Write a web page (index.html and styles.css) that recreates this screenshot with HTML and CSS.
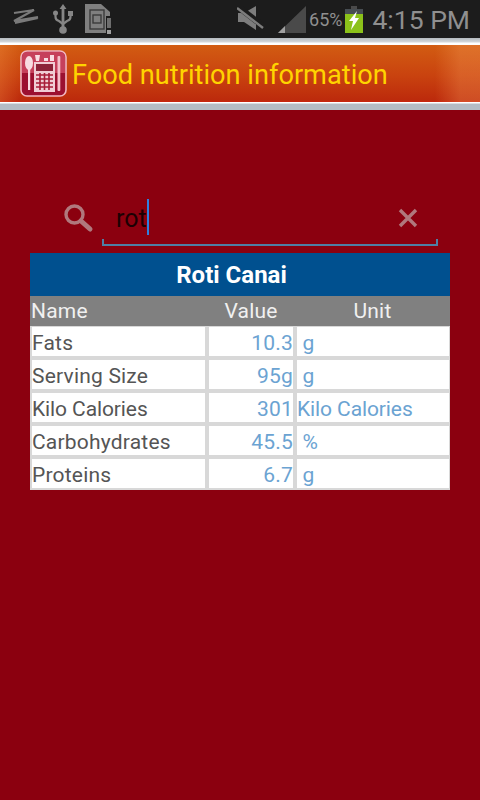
FILE: index.html
```html
<!DOCTYPE html>
<html lang="en">
<head>
    <meta charset="UTF-8">
    <meta name="viewport" content="width=device-width, initial-scale=1.0">
    <title>Food nutrition information</title>
    <link rel="stylesheet" href="styles.css">
</head>
<body>
    <!-- Status bar -->
    <div class="status-bar">
        <div class="status-left">
            <svg class="icon-pen" width="30" height="24" viewBox="0 0 30 24">
                <path d="M4 7 L24 4 L4 15 L28 11 M5 17 L28 12" fill="none" stroke="#7a7a7a" stroke-width="2"/>
            </svg>
            <svg class="icon-usb" width="20" height="30" viewBox="0 0 20 30">
                <path d="M10 0 L13.500 5 H11.400 V24 H8.600 V5 H6.500 Z" fill="#868686"/>
                <circle cx="10" cy="26" r="3.800" fill="#868686"/>
                <path d="M2.500 10 V13 Q2.500 16 6 17 L10 20 L14 17 Q17.500 16 17.500 13 V11" fill="none" stroke="#868686" stroke-width="2.200"/>
                <circle cx="2.500" cy="9" r="2.500" fill="#868686"/>
                <rect x="15" y="7" width="5" height="5" fill="#868686"/>
            </svg>
            <svg class="icon-sd" width="27" height="30" viewBox="0 0 27 30">
                <path d="M0 0 H16 L25 8 V29 H0 Z" fill="#7f7f7f"/>
                <rect x="5" y="6" width="14" height="19" fill="none" stroke="#3b3b3b" stroke-width="1.400"/>
                <rect x="8" y="11" width="8" height="8" fill="none" stroke="#3b3b3b" stroke-width="1.400"/>
                <rect x="21" y="12" width="6" height="18" fill="#1c1c1c"/>
                <rect x="22" y="14" width="4" height="10" fill="#6e6e6e"/>
                <rect x="22" y="26" width="4" height="4" fill="#a0a0a0"/>
            </svg>
        </div>
        <div class="status-right">
            <svg class="icon-mute" width="27" height="24" viewBox="0 0 27 24">
                <path d="M1 7 H7 L19 0 V24 L7 16 H1 Z" fill="#7d7d7d"/>
                <path d="M0 0 L26 20" stroke="#1c1c1c" stroke-width="6"/>
                <path d="M0 2 L26 22" stroke="#7d7d7d" stroke-width="2.400"/>
            </svg>
            <svg class="icon-signal" width="28" height="27" viewBox="0 0 28 27">
                <path d="M28 0 V27 H0 Z" fill="#4a4a4a"/>
                <path d="M7 20 V27 H0 Z" fill="#a0a0a0"/>
            </svg>
            <span class="battery-text">65%</span>
            <svg class="icon-battery" width="18" height="27" viewBox="0 0 18 27">
                <rect x="6" y="0" width="6" height="3" fill="#4a4a4a"/>
                <rect x="0" y="3" width="18" height="6" fill="#474d52"/>
                <rect x="0" y="8" width="18" height="19" fill="#8cc21a"/>
                <path d="M12 5 L4 15 H8 L6 24 L14 12 H10 Z" fill="#fff"/>
            </svg>
            <span class="clock">4:15 PM</span>
        </div>
    </div>

    <!-- App title -->
    <div class="app-header">
        <div class="app-title-bar">
            <svg class="app-icon" width="47" height="47" viewBox="0 0 47 47">
                <rect x="1" y="1" width="45" height="45" rx="6" fill="#9c1030" stroke="#f2b6c0" stroke-width="1.600"/>
                <path d="M2 7 Q2 2 7 2 H40 Q45 2 45 7 V23 H2 Z" fill="#d9566e" opacity="0.7"/>
                <ellipse cx="9" cy="13" rx="4" ry="7" fill="#f8dce2"/>
                <rect x="8" y="19" width="2.200" height="21" fill="#f8dce2"/>
                <rect x="37.500" y="6" width="2.800" height="35" rx="1" fill="#f4c0ca"/>
                <rect x="14" y="12" width="21" height="30" fill="#f0ccd4"/>
                <rect x="16" y="14" width="17" height="7" fill="#8c2238"/>
                <path d="M16 25 H33 M16 29 H33 M16 33 H33 M16 37 H33 M20 23 V40 M24.500 23 V40 M29 23 V40" stroke="#a81c38" stroke-width="1.600"/>
                <path d="M15 5 L20 5 L19 11 H16 Z M24 8 H28 V11 H24 Z M30 5 H34 V11 H30 Z" fill="#f8dce2"/>
            </svg>
            <span class="app-title">Food nutrition information</span>
        </div>
    </div>

    <div class="content">
        <!-- Search box -->
        <div class="search-row">
            <svg class="icon-search" width="32" height="32" viewBox="0 0 32 32">
                <circle cx="12.500" cy="12.500" r="8.500" fill="none" stroke="#b0787d" stroke-width="3.400"/>
                <path d="M19 19 L28 27" stroke="#b0787d" stroke-width="5" stroke-linecap="round"/>
            </svg>
            <div class="search-field">
                <span class="search-text">rot</span><span class="caret"></span>
                <svg class="icon-clear" width="22" height="22" viewBox="0 0 22 22">
                    <path d="M3 3 L19 19 M19 3 L3 19" stroke="#b0787d" stroke-width="3.400"/>
                </svg>
            </div>
        </div>

        <!-- Nutrition table -->
        <div class="food-table">
            <div class="food-name">Roti Canai</div>
            <div class="table-head">
                <span>Name</span>
                <span class="center">Value</span>
                <span class="center">Unit</span>
            </div>
            <div class="table-rows">
                <div class="cell name">Fats</div>
                <div class="cell value">10.3</div>
                <div class="cell unit">&nbsp;g</div>
                <div class="cell name">Serving Size</div>
                <div class="cell value">95g</div>
                <div class="cell unit">&nbsp;g</div>
                <div class="cell name tight">Kilo Calories</div>
                <div class="cell value">301</div>
                <div class="cell unit tight">Kilo Calories</div>
                <div class="cell name">Carbohydrates</div>
                <div class="cell value">45.5</div>
                <div class="cell unit">&nbsp;%</div>
                <div class="cell name">Proteins</div>
                <div class="cell value">6.7</div>
                <div class="cell unit">&nbsp;g</div>
            </div>
        </div>
    </div>
</body>
</html>
```

FILE: styles.css
```css
html, body {
    margin: 0;
    padding: 0;
}
body {
    width: 480px;
    height: 800px;
    overflow: hidden;
    font-family: Roboto, sans-serif;
    background-color: #8b000f;
}
.status-bar {
    height: 38px;
    box-sizing: border-box;
    padding: 0 10px 0 8px;
    background-color: #1c1c1c;
    display: flex;
    justify-content: space-between;
    align-items: center;
}
.status-left {
    display: flex;
    align-items: center;
}
.icon-pen {
    margin: 0 13px 3px 2px;
}
.icon-usb {
    margin-right: 12px;
}
.status-right {
    display: flex;
    align-items: center;
}
.icon-mute {
    margin: 0 14px 2px 0;
}
.icon-signal {
    margin-right: 3px;
}
.battery-text {
    color: #8f8f8f;
    font-size: 18px;
    margin-right: 3px;
}
.icon-battery {
    margin-right: 9px;
}
.clock {
    color: #8f8f8f;
    font-size: 26.500px;
}
.app-header {
    height: 72px;
    box-sizing: border-box;
    padding: 7px 0 8px;
    background: linear-gradient(#b4babf 0, #d4d8db 4px, #fff 5px, #fff 65px, #b4bcc4 66px, #b4bcc4 100%);
}
.app-title-bar {
    height: 57px;
    box-sizing: border-box;
    padding-left: 20px;
    display: flex;
    align-items: center;
    background:
        linear-gradient(90deg, rgba(255, 160, 80, 0.25), rgba(255, 160, 80, 0) 20px, rgba(255, 160, 80, 0) 435px, rgba(255, 170, 100, 0.28) 460px),
        linear-gradient(#d25c12, #c9420f 55%, #bc2a0c 97%, #cc2410);
}
.app-icon {
    margin-right: 5px;
}
.app-title {
    color: #ffd400;
    font-size: 27.200px;
    padding-top: 2px;
    white-space: nowrap;
}
.content {
    padding: 89px 30px 0;
}
.search-row {
    display: flex;
    align-items: flex-start;
    height: 54px;
}
.icon-search {
    margin: 3px 8px 0 32px;
    flex: none;
}
.search-field {
    position: relative;
    width: 336px;
    height: 47px;
    box-sizing: border-box;
    padding: 5px 0 0 14px;
    display: flex;
    align-items: flex-start;
    border-bottom: 2px solid #4f7fa5;
}
.search-field::before,
.search-field::after {
    content: "";
    position: absolute;
    bottom: 0;
    width: 2px;
    height: 5px;
    background-color: #4f7fa5;
}
.search-field::before {
    left: 0;
}
.search-field::after {
    right: 0;
}
.search-text {
    color: #1c0003;
    font-size: 25px;
    line-height: 30px;
}
.caret {
    width: 2px;
    height: 36px;
    margin-top: -5px;
    background-color: #2f7fe0;
}
.icon-clear {
    position: absolute;
    right: 19px;
    top: 8px;
}
.food-table {
    width: 420px;
    background-color: #d8d8d8;
    padding-bottom: 2px;
}
.food-name {
    height: 43px;
    line-height: 45px;
    text-align: center;
    padding-right: 17px;
    color: #fff;
    font-size: 24px;
    font-weight: bold;
    background-color: #00508f;
}
.table-head {
    height: 30px;
    display: grid;
    grid-template-columns: 177px 88px 155px;
    background-color: #808080;
    color: #f0f0f0;
    font-size: 21px;
    letter-spacing: 0.2px;
    line-height: 31px;
}
.table-head span {
    padding-left: 1px;
}
.table-head .center {
    text-align: center;
    padding-left: 0;
}
.table-rows {
    display: grid;
    grid-template-columns: 173px 84px 152px;
    grid-auto-rows: 29px;
    gap: 4px;
    padding: 1px 1px 0 2px;
}
.cell {
    background-color: #fff;
    font-size: 21px;
    letter-spacing: 0.2px;
    line-height: 33px;
    white-space: nowrap;
    overflow: hidden;
}
.tight {
    letter-spacing: -0.100px;
}
.name {
    color: #555;
}
.value {
    color: #6ba3d2;
    text-align: right;
}
.unit {
    color: #6ba3d2;
}
```
